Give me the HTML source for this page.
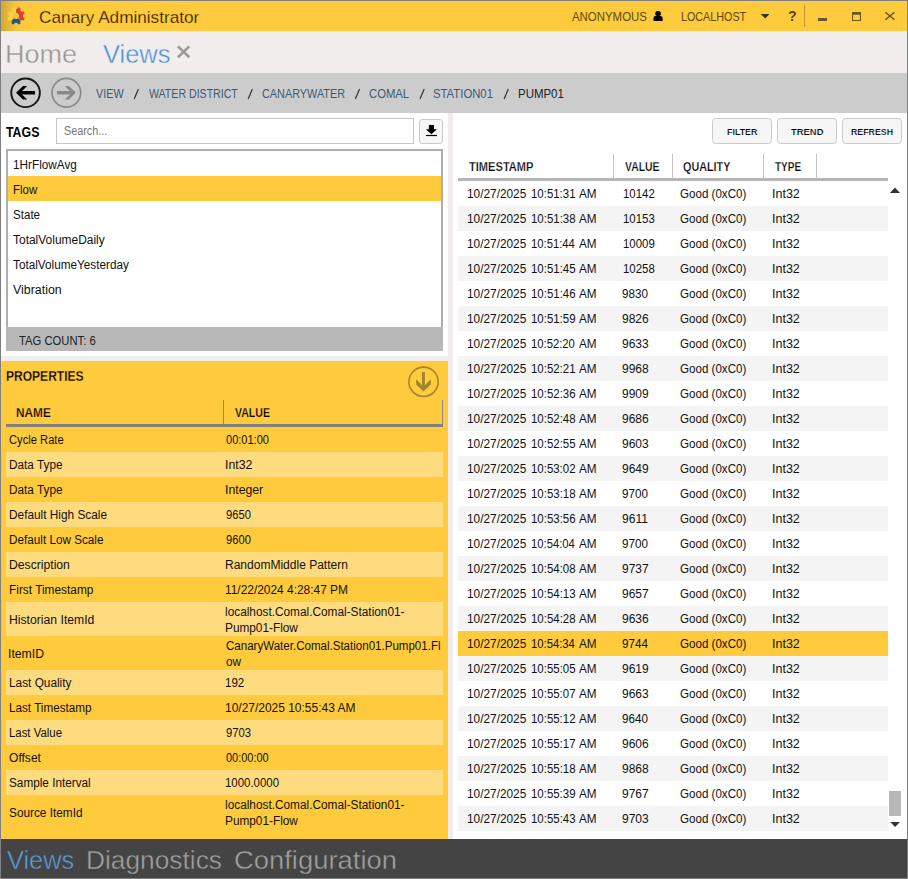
<!DOCTYPE html><html><head><meta charset="utf-8"><title>Canary Administrator</title><style>
html,body{margin:0;padding:0;width:908px;height:879px;overflow:hidden;background:#fff;font-family:"Liberation Sans",sans-serif;}
.b{position:absolute;}
.t{position:absolute;white-space:pre;line-height:1;transform-origin:0 0;}
</style></head><body>
<div class="b" style="left:0px;top:0px;width:908px;height:879px;background:#7f7f7f;"></div>
<div class="b" style="left:1px;top:1px;width:906px;height:30px;background:#FFCB3C;background:linear-gradient(90deg,#d4a830 0px,#f4c440 14px,#ffcb3c 28px,#ffcb3c 100%);"></div>
<div class="b" style="left:1px;top:31px;width:906px;height:42px;background:#f1eded;"></div>
<div class="b" style="left:1px;top:73px;width:906px;height:40px;background:#cccccc;"></div>
<div class="b" style="left:1px;top:113px;width:906px;height:726px;background:#ffffff;"></div>
<div class="b" style="left:448px;top:113px;width:5px;height:726px;background:#f1eded;"></div>
<div class="b" style="left:56px;top:118px;width:358px;height:26px;background:#fff;border:1px solid #c6c6c6;box-sizing:border-box;"></div>
<div class="b" style="left:419px;top:119px;width:24px;height:25px;background:#f7f7f7;border:1px solid #cacaca;border-radius:3px;box-sizing:border-box;"></div>
<div class="b" style="left:6px;top:149px;width:437px;height:202px;background:#adadad;"></div>
<div class="b" style="left:8px;top:151px;width:433px;height:176px;background:#ffffff;"></div>
<div class="b" style="left:8px;top:176px;width:433px;height:25px;background:#FFCB3C;"></div>
<div class="b" style="left:6px;top:327px;width:437px;height:24px;background:#b8b8b8;"></div>
<div class="b" style="left:1px;top:356px;width:447px;height:5px;background:#f1eded;"></div>
<div class="b" style="left:1px;top:361px;width:447px;height:478px;background:#FFCB3C;"></div>
<div class="b" style="left:223px;top:400px;width:1px;height:24px;background:#8a8a8a;"></div>
<div class="b" style="left:442px;top:400px;width:1px;height:27px;background:#8a8a8a;"></div>
<div class="b" style="left:6px;top:424px;width:437px;height:3px;background:#808080;"></div>
<div class="b" style="left:6px;top:452px;width:437px;height:25px;background:#FFDB80;"></div>
<div class="b" style="left:6px;top:502px;width:437px;height:25px;background:#FFDB80;"></div>
<div class="b" style="left:6px;top:552px;width:437px;height:25px;background:#FFDB80;"></div>
<div class="b" style="left:6px;top:602px;width:437px;height:34px;background:#FFDB80;"></div>
<div class="b" style="left:6px;top:670px;width:437px;height:25px;background:#FFDB80;"></div>
<div class="b" style="left:6px;top:720px;width:437px;height:25px;background:#FFDB80;"></div>
<div class="b" style="left:6px;top:770px;width:437px;height:25px;background:#FFDB80;"></div>
<div class="b" style="left:712px;top:118px;width:60px;height:26px;background:#f6f6f6;border:1px solid #cbcbcb;border-radius:3.5px;box-sizing:border-box;"></div>
<div class="b" style="left:777px;top:118px;width:60px;height:26px;background:#f6f6f6;border:1px solid #cbcbcb;border-radius:3.5px;box-sizing:border-box;"></div>
<div class="b" style="left:842px;top:118px;width:60px;height:26px;background:#f6f6f6;border:1px solid #cbcbcb;border-radius:3.5px;box-sizing:border-box;"></div>
<div class="b" style="left:613px;top:154px;width:1px;height:24px;background:#c4c4c4;"></div>
<div class="b" style="left:672px;top:154px;width:1px;height:24px;background:#c4c4c4;"></div>
<div class="b" style="left:763px;top:154px;width:1px;height:24px;background:#c4c4c4;"></div>
<div class="b" style="left:816px;top:154px;width:1px;height:24px;background:#c4c4c4;"></div>
<div class="b" style="left:458px;top:178px;width:430px;height:3px;background:#b5b5b5;"></div>
<div class="b" style="left:458px;top:206px;width:430px;height:25px;background:#f4f4f4;"></div>
<div class="b" style="left:458px;top:256px;width:430px;height:25px;background:#f4f4f4;"></div>
<div class="b" style="left:458px;top:306px;width:430px;height:25px;background:#f4f4f4;"></div>
<div class="b" style="left:458px;top:356px;width:430px;height:25px;background:#f4f4f4;"></div>
<div class="b" style="left:458px;top:406px;width:430px;height:25px;background:#f4f4f4;"></div>
<div class="b" style="left:458px;top:456px;width:430px;height:25px;background:#f4f4f4;"></div>
<div class="b" style="left:458px;top:506px;width:430px;height:25px;background:#f4f4f4;"></div>
<div class="b" style="left:458px;top:556px;width:430px;height:25px;background:#f4f4f4;"></div>
<div class="b" style="left:458px;top:606px;width:430px;height:25px;background:#f4f4f4;"></div>
<div class="b" style="left:458px;top:631px;width:430px;height:25px;background:#FFCB3C;"></div>
<div class="b" style="left:458px;top:656px;width:430px;height:25px;background:#f4f4f4;"></div>
<div class="b" style="left:458px;top:706px;width:430px;height:25px;background:#f4f4f4;"></div>
<div class="b" style="left:458px;top:756px;width:430px;height:25px;background:#f4f4f4;"></div>
<div class="b" style="left:458px;top:806px;width:430px;height:25px;background:#f4f4f4;"></div>
<div class="b" style="left:889px;top:791px;width:12px;height:25px;background:#b8b8b8;"></div>
<div class="b" style="left:1px;top:839px;width:906px;height:39px;background:#444444;"></div>

<svg class="b" style="left:0;top:0" width="908" height="879" viewBox="0 0 908 879">
<!-- logo -->
<path fill="#d3472d" d="M16.15 8.90 L16.33 8.91 L16.51 8.92 L16.70 8.93 L16.88 8.96 L17.06 8.98 L17.28 8.78 L17.57 8.33 L17.88 7.88 L18.22 7.45 L18.51 7.26 L18.74 7.33 L18.96 7.40 L19.18 7.48 L19.40 7.57 L19.62 7.66 L19.83 7.76 L20.04 7.86 L20.25 7.97 L20.43 8.14 L20.37 8.69 L20.29 9.22 L20.18 9.75 L20.08 10.22 L20.23 10.32 L20.38 10.44 L20.52 10.55 L20.66 10.67 L20.79 10.80 L20.92 10.92 L21.05 11.05 L21.18 11.19 L21.30 11.33 L21.42 11.47 L21.53 11.61 L21.64 11.76 L21.94 11.77 L22.46 11.65 L23.00 11.56 L23.54 11.49 L23.89 11.56 L24.00 11.77 L24.10 11.98 L24.20 12.20 L24.30 12.41 L24.39 12.63 L24.47 12.85 L24.54 13.07 L24.62 13.30 L24.62 13.54 L24.19 13.89 L23.75 14.21 L23.30 14.51 L22.91 14.77 L22.94 14.95 L22.96 15.13 L22.98 15.31 L22.99 15.50 L23.00 15.68 L23.00 15.86 L23.00 16.05 L22.99 16.23 L22.98 16.41 L22.97 16.60 L22.94 16.78 L22.92 16.96 L23.12 17.18 L23.57 17.47 L24.02 17.78 L24.45 18.12 L24.64 18.41 L24.57 18.64 L24.50 18.86 L24.42 19.08 L24.33 19.30 L24.24 19.52 L24.14 19.73 L24.04 19.94 L23.93 20.15 L23.76 20.33 L23.21 20.27 L22.68 20.19 L22.15 20.08 L21.68 19.98 L21.58 20.13 L21.46 20.28 L21.35 20.42 L21.23 20.56 L21.10 20.69 L18.24 18.05 L18.45 17.80 L18.63 17.53 L18.79 17.25 L18.92 16.95 L19.01 16.64 L19.07 16.32 L19.10 16.00 L19.09 15.67 L19.05 15.35 L18.98 15.04 L18.87 14.73 L18.73 14.44 L18.56 14.16 L18.37 13.90 L18.15 13.66 L17.90 13.45 L17.63 13.27 L17.35 13.11 L17.05 12.98 L16.74 12.89 L16.42 12.83 L16.10 12.80 Z"/><path fill="#28597a" d="M20.85 20.95 L20.71 21.08 L20.57 21.20 L20.43 21.32 L20.29 21.43 L20.14 21.54 L20.13 21.84 L20.25 22.36 L20.34 22.90 L20.41 23.44 L20.34 23.79 L20.13 23.90 L19.92 24.00 L19.70 24.10 L19.49 24.20 L19.27 24.29 L19.05 24.37 L18.83 24.44 L18.60 24.52 L18.36 24.52 L18.01 24.09 L17.69 23.65 L17.39 23.20 L17.13 22.81 L16.95 22.84 L16.77 22.86 L16.59 22.88 L16.40 22.89 L16.22 22.90 L16.04 22.90 L15.85 22.90 L15.67 22.89 L15.49 22.88 L15.30 22.87 L15.12 22.84 L14.94 22.82 L14.72 23.02 L14.43 23.47 L14.12 23.92 L13.78 24.35 L13.49 24.54 L13.26 24.47 L13.04 24.40 L12.82 24.32 L12.60 24.23 L12.38 24.14 L12.17 24.04 L11.96 23.94 L11.75 23.83 L11.57 23.66 L11.63 23.11 L11.71 22.58 L11.82 22.05 L11.92 21.58 L11.77 21.48 L11.62 21.36 L11.48 21.25 L11.34 21.13 L11.21 21.00 L13.85 18.14 L14.10 18.35 L14.37 18.53 L14.65 18.69 L14.95 18.82 L15.26 18.91 L15.58 18.97 L15.90 19.00 L16.23 18.99 L16.55 18.95 L16.86 18.88 L17.17 18.77 L17.46 18.63 L17.74 18.46 L18.00 18.27 Z"/><path fill="#ffd143" d="M10.95 20.75 L10.82 20.61 L10.70 20.47 L10.58 20.33 L10.47 20.19 L10.36 20.04 L10.06 20.03 L9.54 20.15 L9.00 20.24 L8.46 20.31 L8.11 20.24 L8.00 20.03 L7.90 19.82 L7.80 19.60 L7.70 19.39 L7.61 19.17 L7.53 18.95 L7.46 18.73 L7.38 18.50 L7.38 18.26 L7.81 17.91 L8.25 17.59 L8.70 17.29 L9.09 17.03 L9.06 16.85 L9.04 16.67 L9.02 16.49 L9.01 16.30 L9.00 16.12 L9.00 15.94 L9.00 15.75 L9.01 15.57 L9.02 15.39 L9.03 15.20 L9.06 15.02 L9.08 14.84 L8.88 14.62 L8.43 14.33 L7.98 14.02 L7.55 13.68 L7.36 13.39 L7.43 13.16 L7.50 12.94 L7.58 12.72 L7.67 12.50 L7.76 12.28 L7.86 12.07 L7.96 11.86 L8.07 11.65 L8.24 11.47 L8.79 11.53 L9.32 11.61 L9.85 11.72 L10.32 11.82 L10.42 11.67 L10.54 11.52 L10.65 11.38 L10.77 11.24 L10.90 11.11 L11.02 10.98 L11.15 10.85 L11.29 10.72 L11.43 10.60 L11.57 10.48 L11.71 10.37 L11.86 10.26 L11.87 9.96 L11.75 9.44 L11.66 8.90 L11.59 8.36 L11.66 8.01 L11.87 7.90 L12.08 7.80 L12.30 7.70 L12.51 7.60 L12.73 7.51 L12.95 7.43 L13.17 7.36 L13.40 7.28 L13.64 7.28 L13.99 7.71 L14.31 8.15 L14.61 8.60 L14.87 8.99 L15.05 8.96 L15.23 8.94 L15.41 8.92 L15.60 8.91 L15.78 8.90 L15.94 12.80 L15.61 12.82 L15.29 12.88 L14.98 12.97 L14.68 13.10 L14.39 13.25 L14.13 13.43 L13.88 13.64 L13.65 13.87 L13.45 14.13 L13.28 14.41 L13.14 14.70 L13.03 15.00 L12.95 15.32 L12.91 15.64 L12.90 15.96 L12.92 16.29 L12.98 16.61 L13.07 16.92 L13.20 17.22 L13.35 17.51 L13.53 17.77 L13.74 18.02 Z"/>
<!-- person -->
<g fill="#000"><ellipse cx="658.05" cy="13.6" rx="2.85" ry="2.6"/><path d="M653.5 20.9 V17.8 Q653.5 16 655.6 16 H660.5 Q662.6 16 662.6 17.8 V20.9 Z"/></g>
<!-- dropdown -->
<path d="M760.8 14 L769.5 14 L765.15 18.6 Z" fill="#333"/>
<!-- sep -->
<rect x="804" y="5" width="1" height="22" fill="#c39a2e"/>
<!-- min -->
<rect x="818" y="18" width="9" height="3" fill="#6b5720"/>
<!-- max -->
<path d="M852 12 H861 V21 H852 Z M853.1 14.7 V19.9 H859.9 V14.7 Z" fill="#6b5720" fill-rule="evenodd"/>
<!-- close -->
<path d="M885.4 12.3 L894.5 19.8 M894.5 12.3 L885.4 19.8" stroke="#5e4c18" stroke-width="1.3" fill="none"/>
<!-- tab close -->
<path d="M178.0 46.4 L189.3 57.3 M189.3 46.4 L178.0 57.3" stroke="#9a9a9a" stroke-width="2.6" fill="none"/>
<!-- slashes --><path d="M134.2 98.9 L138.4 88.9" stroke="#333" stroke-width="1.2" fill="none"/><path d="M248.2 98.9 L252.4 88.9" stroke="#333" stroke-width="1.2" fill="none"/><path d="M355.3 98.9 L359.5 88.9" stroke="#333" stroke-width="1.2" fill="none"/><path d="M420.0 98.9 L424.2 88.9" stroke="#333" stroke-width="1.2" fill="none"/><path d="M504.1 98.9 L508.3 88.9" stroke="#333" stroke-width="1.2" fill="none"/>
<!-- back -->
<circle cx="25.55" cy="92.8" r="14.3" fill="none" stroke="#161616" stroke-width="1.9"/>
<path d="M16 92.8 L23 86 L27.2 86 L22.0 91.1 L35 91.1 L35 94.5 L22.0 94.5 L27.2 99.6 L23 99.6 Z" fill="#000"/>
<!-- fwd -->
<circle cx="66.35" cy="92.8" r="14.35" fill="none" stroke="#8b8b8b" stroke-width="1.7"/>
<path d="M75.9 92.8 L68.9 86 L64.7 86 L69.9 91.1 L56.9 91.1 L56.9 94.5 L69.9 94.5 L64.7 99.6 L68.9 99.6 Z" fill="#8a8a8a"/>
<!-- download -->
<path d="M428.9 125 H434 V129.2 H437 L431.45 134.3 L425.9 129.2 H428.9 Z" fill="#000"/>
<rect x="425.9" y="134.9" width="11.1" height="1.2" fill="#000"/>
<!-- props circle -->
<circle cx="423.55" cy="381.8" r="14.65" fill="none" stroke="#a3862b" stroke-width="1.6"/>
<path d="M422 372 H424.9 V385.2 L430.85 379.3 V384.5 L423.5 391.6 L416.1 384.5 V379.3 L422 385.2 Z" fill="#a3862b"/>
<!-- scroll arrows -->
<path d="M889.9 193 L900 193 L894.95 187.4 Z" fill="#333"/>
<path d="M890.2 822 L900 822 L895.1 827 Z" fill="#333"/>
</svg>

<span class="t" style="left:39.15px;top:9px;font-size:17px;color:#1c1500;transform:scaleX(1.0096);-webkit-text-stroke:0.25px #FFCB3C;">Canary Administrator</span>
<span class="t" style="left:572.35px;top:11px;font-size:12px;color:#5a4a18;transform:scaleX(0.9518);">ANONYMOUS</span>
<span class="t" style="left:680.75px;top:11px;font-size:12px;color:#5a4a18;transform:scaleX(0.8961);">LOCALHOST</span>
<span class="t" style="left:787.61px;top:9px;font-size:14.6px;font-weight:700;color:#5a4410;transform:scaleX(0.9655);">?</span>
<span class="t" style="left:4.82px;top:41px;font-size:26.4px;color:#959595;transform:scaleX(1.0245);-webkit-text-stroke:0.4px #f1eded;">Home</span>
<span class="t" style="left:103.12px;top:41px;font-size:26.4px;color:#4a90d9;transform:scaleX(0.9657);-webkit-text-stroke:0.4px #f1eded;">Views</span>
<span class="t" style="left:96.35px;top:88px;font-size:12.9px;color:#3b5a78;transform:scaleX(0.8382);">VIEW</span>
<span class="t" style="left:148.58px;top:88px;font-size:12.9px;color:#3b5a78;transform:scaleX(0.8212);">WATER DISTRICT</span>
<span class="t" style="left:262.01px;top:88px;font-size:12.9px;color:#3b5a78;transform:scaleX(0.8420);">CANARYWATER</span>
<span class="t" style="left:369.20px;top:88px;font-size:12.9px;color:#3b5a78;transform:scaleX(0.8736);">COMAL</span>
<span class="t" style="left:433.36px;top:88px;font-size:12.9px;color:#3b5a78;transform:scaleX(0.8781);">STATION01</span>
<span class="t" style="left:517.73px;top:88px;font-size:12.9px;color:#222;transform:scaleX(0.8882);">PUMP01</span>
<span class="t" style="left:5.99px;top:125px;font-size:14px;font-weight:700;color:#000;transform:scaleX(0.8814);">TAGS</span>
<span class="t" style="left:63.63px;top:125px;font-size:12px;color:#777;transform:scaleX(0.9013);">Search...</span>
<span class="t" style="left:12.58px;top:159px;font-size:12px;color:#111;transform:scaleX(0.9799);">1HrFlowAvg</span>
<span class="t" style="left:12.59px;top:184px;font-size:12px;color:#111;transform:scaleX(0.9574);">Flow</span>
<span class="t" style="left:12.56px;top:209px;font-size:12px;color:#111;transform:scaleX(0.9647);">State</span>
<span class="t" style="left:13.44px;top:234px;font-size:12px;color:#111;transform:scaleX(0.9966);">TotalVolumeDaily</span>
<span class="t" style="left:13.44px;top:259px;font-size:12px;color:#111;transform:scaleX(0.9794);">TotalVolumeYesterday</span>
<span class="t" style="left:13.43px;top:284px;font-size:12px;color:#111;transform:scaleX(1.0328);">Vibration</span>
<span class="t" style="left:19.35px;top:335px;font-size:12px;color:#222;transform:scaleX(0.9377);">TAG COUNT: 6</span>
<span class="t" style="left:5.99px;top:370px;font-size:13.8px;font-weight:700;color:#000;transform:scaleX(0.8725);-webkit-text-stroke:0.28px #FFCB3C;">PROPERTIES</span>
<span class="t" style="left:15.99px;top:407px;font-size:12px;font-weight:700;color:#000;transform:scaleX(0.9858);-webkit-text-stroke:0.25px #FFCB3C;">NAME</span>
<span class="t" style="left:235.06px;top:407px;font-size:12px;font-weight:700;color:#000;transform:scaleX(0.8777);-webkit-text-stroke:0.25px #FFCB3C;">VALUE</span>
<span class="t" style="left:9.29px;top:434px;font-size:12px;color:#111;transform:scaleX(0.9315);">Cycle Rate</span>
<span class="t" style="left:225.56px;top:434px;font-size:12px;color:#111;transform:scaleX(0.9185);">00:01:00</span>
<span class="t" style="left:8.56px;top:459px;font-size:12px;color:#111;transform:scaleX(0.9816);">Data Type</span>
<span class="t" style="left:224.95px;top:459px;font-size:12px;color:#111;transform:scaleX(1.0220);">Int32</span>
<span class="t" style="left:8.56px;top:484px;font-size:12px;color:#111;transform:scaleX(0.9816);">Data Type</span>
<span class="t" style="left:224.95px;top:484px;font-size:12px;color:#111;transform:scaleX(1.0222);">Integer</span>
<span class="t" style="left:8.56px;top:509px;font-size:12px;color:#111;transform:scaleX(0.9860);">Default High Scale</span>
<span class="t" style="left:225.79px;top:509px;font-size:12px;color:#111;transform:scaleX(0.9310);">9650</span>
<span class="t" style="left:8.57px;top:534px;font-size:12px;color:#111;transform:scaleX(0.9766);">Default Low Scale</span>
<span class="t" style="left:225.79px;top:534px;font-size:12px;color:#111;transform:scaleX(0.9310);">9600</span>
<span class="t" style="left:8.53px;top:559px;font-size:12px;color:#111;transform:scaleX(1.0140);">Description</span>
<span class="t" style="left:225.04px;top:559px;font-size:12px;color:#111;transform:scaleX(1.0015);">RandomMiddle Pattern</span>
<span class="t" style="left:8.55px;top:584px;font-size:12px;color:#111;transform:scaleX(0.9888);">First Timestamp</span>
<span class="t" style="left:225.06px;top:584px;font-size:12px;color:#111;transform:scaleX(0.9924);">11/22/2024 4:28:47 PM</span>
<span class="t" style="left:8.52px;top:614px;font-size:12px;color:#111;transform:scaleX(1.0161);">Historian ItemId</span>
<span class="t" style="left:225.00px;top:606px;font-size:12px;color:#111;transform:scaleX(0.9860);">localhost.Comal.Comal-Station01-</span>
<span class="t" style="left:225.06px;top:622px;font-size:12px;color:#111;transform:scaleX(0.9848);">Pump01-Flow</span>
<span class="t" style="left:8.45px;top:648px;font-size:12px;color:#111;transform:scaleX(1.0189);">ItemID</span>
<span class="t" style="left:225.78px;top:640px;font-size:12px;color:#111;transform:scaleX(0.9619);">CanaryWater.Comal.Station01.Pump01.Fl</span>
<span class="t" style="left:225.82px;top:656px;font-size:12px;color:#111;transform:scaleX(0.9793);">ow</span>
<span class="t" style="left:8.56px;top:677px;font-size:12px;color:#111;transform:scaleX(0.9850);">Last Quality</span>
<span class="t" style="left:225.09px;top:677px;font-size:12px;color:#111;transform:scaleX(0.9643);">192</span>
<span class="t" style="left:8.57px;top:702px;font-size:12px;color:#111;transform:scaleX(0.9739);">Last Timestamp</span>
<span class="t" style="left:225.06px;top:702px;font-size:12px;color:#111;transform:scaleX(0.9972);">10/27/2025 10:55:43 AM</span>
<span class="t" style="left:8.59px;top:727px;font-size:12px;color:#111;transform:scaleX(0.9495);">Last Value</span>
<span class="t" style="left:225.79px;top:727px;font-size:12px;color:#111;transform:scaleX(0.9389);">9703</span>
<span class="t" style="left:9.29px;top:752px;font-size:12px;color:#111;transform:scaleX(1.0050);">Offset</span>
<span class="t" style="left:225.56px;top:752px;font-size:12px;color:#111;transform:scaleX(0.9120);">00:00:00</span>
<span class="t" style="left:8.54px;top:777px;font-size:12px;color:#111;transform:scaleX(0.9799);">Sample Interval</span>
<span class="t" style="left:225.10px;top:777px;font-size:12px;color:#111;transform:scaleX(0.9532);">1000.0000</span>
<span class="t" style="left:8.54px;top:807px;font-size:12px;color:#111;transform:scaleX(0.9845);">Source ItemId</span>
<span class="t" style="left:225.00px;top:799px;font-size:12px;color:#111;transform:scaleX(0.9860);">localhost.Comal.Comal-Station01-</span>
<span class="t" style="left:225.06px;top:815px;font-size:12px;color:#111;transform:scaleX(0.9848);">Pump01-Flow</span>
<span class="t" style="left:727.10px;top:127px;font-size:9.7px;font-weight:700;color:#000;transform:scaleX(0.9184);-webkit-text-stroke:0.2px #f6f6f6;">FILTER</span>
<span class="t" style="left:791.10px;top:127px;font-size:9.7px;font-weight:700;color:#000;transform:scaleX(0.9728);-webkit-text-stroke:0.2px #f6f6f6;">TREND</span>
<span class="t" style="left:851.20px;top:127px;font-size:9.7px;font-weight:700;color:#000;transform:scaleX(0.9077);-webkit-text-stroke:0.2px #f6f6f6;">REFRESH</span>
<span class="t" style="left:469.00px;top:161px;font-size:12px;font-weight:700;color:#000;transform:scaleX(0.9240);-webkit-text-stroke:0.25px #fff;">TIMESTAMP</span>
<span class="t" style="left:624.66px;top:161px;font-size:12px;font-weight:700;color:#000;transform:scaleX(0.8651);-webkit-text-stroke:0.25px #fff;">VALUE</span>
<span class="t" style="left:683.04px;top:161px;font-size:12px;font-weight:700;color:#000;transform:scaleX(0.8988);-webkit-text-stroke:0.25px #fff;">QUALITY</span>
<span class="t" style="left:775.01px;top:161px;font-size:12px;font-weight:700;color:#000;transform:scaleX(0.8345);-webkit-text-stroke:0.25px #fff;">TYPE</span>
<span class="t" style="left:466.87px;top:188px;font-size:12px;color:#111;transform:scaleX(0.9868);">10/27/2025</span>
<span class="t" style="left:531.20px;top:188px;font-size:12px;color:#111;transform:scaleX(0.9525);">10:51:31</span>
<span class="t" style="left:578.94px;top:188px;font-size:12px;color:#111;transform:scaleX(0.9758);">AM</span>
<span class="t" style="left:622.91px;top:188px;font-size:12px;color:#111;transform:scaleX(0.9506);">10142</span>
<span class="t" style="left:680.48px;top:188px;font-size:12px;color:#111;transform:scaleX(0.9651);">Good (0xC0)</span>
<span class="t" style="left:771.93px;top:188px;font-size:12px;color:#111;transform:scaleX(1.0421);">Int32</span>
<span class="t" style="left:466.87px;top:213px;font-size:12px;color:#111;transform:scaleX(0.9868);">10/27/2025</span>
<span class="t" style="left:531.20px;top:213px;font-size:12px;color:#111;transform:scaleX(0.9544);">10:51:38</span>
<span class="t" style="left:578.94px;top:213px;font-size:12px;color:#111;transform:scaleX(0.9758);">AM</span>
<span class="t" style="left:622.91px;top:213px;font-size:12px;color:#111;transform:scaleX(0.9517);">10153</span>
<span class="t" style="left:680.48px;top:213px;font-size:12px;color:#111;transform:scaleX(0.9651);">Good (0xC0)</span>
<span class="t" style="left:771.93px;top:213px;font-size:12px;color:#111;transform:scaleX(1.0421);">Int32</span>
<span class="t" style="left:466.87px;top:238px;font-size:12px;color:#111;transform:scaleX(0.9868);">10/27/2025</span>
<span class="t" style="left:531.22px;top:238px;font-size:12px;color:#111;transform:scaleX(0.9372);">10:51:44</span>
<span class="t" style="left:578.94px;top:238px;font-size:12px;color:#111;transform:scaleX(0.9758);">AM</span>
<span class="t" style="left:622.91px;top:238px;font-size:12px;color:#111;transform:scaleX(0.9507);">10009</span>
<span class="t" style="left:680.48px;top:238px;font-size:12px;color:#111;transform:scaleX(0.9651);">Good (0xC0)</span>
<span class="t" style="left:771.93px;top:238px;font-size:12px;color:#111;transform:scaleX(1.0421);">Int32</span>
<span class="t" style="left:466.87px;top:263px;font-size:12px;color:#111;transform:scaleX(0.9868);">10/27/2025</span>
<span class="t" style="left:531.20px;top:263px;font-size:12px;color:#111;transform:scaleX(0.9544);">10:51:45</span>
<span class="t" style="left:578.94px;top:263px;font-size:12px;color:#111;transform:scaleX(0.9758);">AM</span>
<span class="t" style="left:622.91px;top:263px;font-size:12px;color:#111;transform:scaleX(0.9517);">10258</span>
<span class="t" style="left:680.48px;top:263px;font-size:12px;color:#111;transform:scaleX(0.9651);">Good (0xC0)</span>
<span class="t" style="left:771.93px;top:263px;font-size:12px;color:#111;transform:scaleX(1.0421);">Int32</span>
<span class="t" style="left:466.87px;top:288px;font-size:12px;color:#111;transform:scaleX(0.9868);">10/27/2025</span>
<span class="t" style="left:531.20px;top:288px;font-size:12px;color:#111;transform:scaleX(0.9544);">10:51:46</span>
<span class="t" style="left:578.94px;top:288px;font-size:12px;color:#111;transform:scaleX(0.9758);">AM</span>
<span class="t" style="left:622.28px;top:288px;font-size:12px;color:#111;transform:scaleX(0.9728);">9830</span>
<span class="t" style="left:680.48px;top:288px;font-size:12px;color:#111;transform:scaleX(0.9651);">Good (0xC0)</span>
<span class="t" style="left:771.93px;top:288px;font-size:12px;color:#111;transform:scaleX(1.0421);">Int32</span>
<span class="t" style="left:466.87px;top:313px;font-size:12px;color:#111;transform:scaleX(0.9868);">10/27/2025</span>
<span class="t" style="left:531.20px;top:313px;font-size:12px;color:#111;transform:scaleX(0.9528);">10:51:59</span>
<span class="t" style="left:578.94px;top:313px;font-size:12px;color:#111;transform:scaleX(0.9758);">AM</span>
<span class="t" style="left:622.27px;top:313px;font-size:12px;color:#111;transform:scaleX(1.0015);">9826</span>
<span class="t" style="left:680.48px;top:313px;font-size:12px;color:#111;transform:scaleX(0.9651);">Good (0xC0)</span>
<span class="t" style="left:771.93px;top:313px;font-size:12px;color:#111;transform:scaleX(1.0421);">Int32</span>
<span class="t" style="left:466.87px;top:338px;font-size:12px;color:#111;transform:scaleX(0.9868);">10/27/2025</span>
<span class="t" style="left:531.22px;top:338px;font-size:12px;color:#111;transform:scaleX(0.9386);">10:52:20</span>
<span class="t" style="left:578.94px;top:338px;font-size:12px;color:#111;transform:scaleX(0.9758);">AM</span>
<span class="t" style="left:622.27px;top:338px;font-size:12px;color:#111;transform:scaleX(1.0015);">9633</span>
<span class="t" style="left:680.48px;top:338px;font-size:12px;color:#111;transform:scaleX(0.9651);">Good (0xC0)</span>
<span class="t" style="left:771.93px;top:338px;font-size:12px;color:#111;transform:scaleX(1.0421);">Int32</span>
<span class="t" style="left:466.87px;top:363px;font-size:12px;color:#111;transform:scaleX(0.9868);">10/27/2025</span>
<span class="t" style="left:531.20px;top:363px;font-size:12px;color:#111;transform:scaleX(0.9525);">10:52:21</span>
<span class="t" style="left:578.94px;top:363px;font-size:12px;color:#111;transform:scaleX(0.9758);">AM</span>
<span class="t" style="left:622.27px;top:363px;font-size:12px;color:#111;transform:scaleX(1.0016);">9968</span>
<span class="t" style="left:680.48px;top:363px;font-size:12px;color:#111;transform:scaleX(0.9651);">Good (0xC0)</span>
<span class="t" style="left:771.93px;top:363px;font-size:12px;color:#111;transform:scaleX(1.0421);">Int32</span>
<span class="t" style="left:466.87px;top:388px;font-size:12px;color:#111;transform:scaleX(0.9868);">10/27/2025</span>
<span class="t" style="left:531.20px;top:388px;font-size:12px;color:#111;transform:scaleX(0.9544);">10:52:36</span>
<span class="t" style="left:578.94px;top:388px;font-size:12px;color:#111;transform:scaleX(0.9758);">AM</span>
<span class="t" style="left:622.27px;top:388px;font-size:12px;color:#111;transform:scaleX(0.9987);">9909</span>
<span class="t" style="left:680.48px;top:388px;font-size:12px;color:#111;transform:scaleX(0.9651);">Good (0xC0)</span>
<span class="t" style="left:771.93px;top:388px;font-size:12px;color:#111;transform:scaleX(1.0421);">Int32</span>
<span class="t" style="left:466.87px;top:413px;font-size:12px;color:#111;transform:scaleX(0.9868);">10/27/2025</span>
<span class="t" style="left:531.20px;top:413px;font-size:12px;color:#111;transform:scaleX(0.9544);">10:52:48</span>
<span class="t" style="left:578.94px;top:413px;font-size:12px;color:#111;transform:scaleX(0.9758);">AM</span>
<span class="t" style="left:622.27px;top:413px;font-size:12px;color:#111;transform:scaleX(1.0015);">9686</span>
<span class="t" style="left:680.48px;top:413px;font-size:12px;color:#111;transform:scaleX(0.9651);">Good (0xC0)</span>
<span class="t" style="left:771.93px;top:413px;font-size:12px;color:#111;transform:scaleX(1.0421);">Int32</span>
<span class="t" style="left:466.87px;top:438px;font-size:12px;color:#111;transform:scaleX(0.9868);">10/27/2025</span>
<span class="t" style="left:531.20px;top:438px;font-size:12px;color:#111;transform:scaleX(0.9544);">10:52:55</span>
<span class="t" style="left:578.94px;top:438px;font-size:12px;color:#111;transform:scaleX(0.9758);">AM</span>
<span class="t" style="left:622.27px;top:438px;font-size:12px;color:#111;transform:scaleX(1.0015);">9603</span>
<span class="t" style="left:680.48px;top:438px;font-size:12px;color:#111;transform:scaleX(0.9651);">Good (0xC0)</span>
<span class="t" style="left:771.93px;top:438px;font-size:12px;color:#111;transform:scaleX(1.0421);">Int32</span>
<span class="t" style="left:466.87px;top:463px;font-size:12px;color:#111;transform:scaleX(0.9868);">10/27/2025</span>
<span class="t" style="left:531.20px;top:463px;font-size:12px;color:#111;transform:scaleX(0.9525);">10:53:02</span>
<span class="t" style="left:578.94px;top:463px;font-size:12px;color:#111;transform:scaleX(0.9758);">AM</span>
<span class="t" style="left:622.27px;top:463px;font-size:12px;color:#111;transform:scaleX(0.9987);">9649</span>
<span class="t" style="left:680.48px;top:463px;font-size:12px;color:#111;transform:scaleX(0.9651);">Good (0xC0)</span>
<span class="t" style="left:771.93px;top:463px;font-size:12px;color:#111;transform:scaleX(1.0421);">Int32</span>
<span class="t" style="left:466.87px;top:488px;font-size:12px;color:#111;transform:scaleX(0.9868);">10/27/2025</span>
<span class="t" style="left:531.20px;top:488px;font-size:12px;color:#111;transform:scaleX(0.9544);">10:53:18</span>
<span class="t" style="left:578.94px;top:488px;font-size:12px;color:#111;transform:scaleX(0.9758);">AM</span>
<span class="t" style="left:622.28px;top:488px;font-size:12px;color:#111;transform:scaleX(0.9728);">9700</span>
<span class="t" style="left:680.48px;top:488px;font-size:12px;color:#111;transform:scaleX(0.9651);">Good (0xC0)</span>
<span class="t" style="left:771.93px;top:488px;font-size:12px;color:#111;transform:scaleX(1.0421);">Int32</span>
<span class="t" style="left:466.87px;top:513px;font-size:12px;color:#111;transform:scaleX(0.9868);">10/27/2025</span>
<span class="t" style="left:531.20px;top:513px;font-size:12px;color:#111;transform:scaleX(0.9544);">10:53:56</span>
<span class="t" style="left:578.94px;top:513px;font-size:12px;color:#111;transform:scaleX(0.9758);">AM</span>
<span class="t" style="left:622.27px;top:513px;font-size:12px;color:#111;transform:scaleX(1.0083);">9611</span>
<span class="t" style="left:680.48px;top:513px;font-size:12px;color:#111;transform:scaleX(0.9651);">Good (0xC0)</span>
<span class="t" style="left:771.93px;top:513px;font-size:12px;color:#111;transform:scaleX(1.0421);">Int32</span>
<span class="t" style="left:466.87px;top:538px;font-size:12px;color:#111;transform:scaleX(0.9868);">10/27/2025</span>
<span class="t" style="left:531.22px;top:538px;font-size:12px;color:#111;transform:scaleX(0.9372);">10:54:04</span>
<span class="t" style="left:578.94px;top:538px;font-size:12px;color:#111;transform:scaleX(0.9758);">AM</span>
<span class="t" style="left:622.28px;top:538px;font-size:12px;color:#111;transform:scaleX(0.9728);">9700</span>
<span class="t" style="left:680.48px;top:538px;font-size:12px;color:#111;transform:scaleX(0.9651);">Good (0xC0)</span>
<span class="t" style="left:771.93px;top:538px;font-size:12px;color:#111;transform:scaleX(1.0421);">Int32</span>
<span class="t" style="left:466.87px;top:563px;font-size:12px;color:#111;transform:scaleX(0.9868);">10/27/2025</span>
<span class="t" style="left:531.20px;top:563px;font-size:12px;color:#111;transform:scaleX(0.9544);">10:54:08</span>
<span class="t" style="left:578.94px;top:563px;font-size:12px;color:#111;transform:scaleX(0.9758);">AM</span>
<span class="t" style="left:622.27px;top:563px;font-size:12px;color:#111;transform:scaleX(0.9982);">9737</span>
<span class="t" style="left:680.48px;top:563px;font-size:12px;color:#111;transform:scaleX(0.9651);">Good (0xC0)</span>
<span class="t" style="left:771.93px;top:563px;font-size:12px;color:#111;transform:scaleX(1.0421);">Int32</span>
<span class="t" style="left:466.87px;top:588px;font-size:12px;color:#111;transform:scaleX(0.9868);">10/27/2025</span>
<span class="t" style="left:531.20px;top:588px;font-size:12px;color:#111;transform:scaleX(0.9543);">10:54:13</span>
<span class="t" style="left:578.94px;top:588px;font-size:12px;color:#111;transform:scaleX(0.9758);">AM</span>
<span class="t" style="left:622.27px;top:588px;font-size:12px;color:#111;transform:scaleX(0.9982);">9657</span>
<span class="t" style="left:680.48px;top:588px;font-size:12px;color:#111;transform:scaleX(0.9651);">Good (0xC0)</span>
<span class="t" style="left:771.93px;top:588px;font-size:12px;color:#111;transform:scaleX(1.0421);">Int32</span>
<span class="t" style="left:466.87px;top:613px;font-size:12px;color:#111;transform:scaleX(0.9868);">10/27/2025</span>
<span class="t" style="left:531.20px;top:613px;font-size:12px;color:#111;transform:scaleX(0.9544);">10:54:28</span>
<span class="t" style="left:578.94px;top:613px;font-size:12px;color:#111;transform:scaleX(0.9758);">AM</span>
<span class="t" style="left:622.27px;top:613px;font-size:12px;color:#111;transform:scaleX(1.0015);">9636</span>
<span class="t" style="left:680.48px;top:613px;font-size:12px;color:#111;transform:scaleX(0.9651);">Good (0xC0)</span>
<span class="t" style="left:771.93px;top:613px;font-size:12px;color:#111;transform:scaleX(1.0421);">Int32</span>
<span class="t" style="left:466.87px;top:638px;font-size:12px;color:#111;transform:scaleX(0.9868);">10/27/2025</span>
<span class="t" style="left:531.22px;top:638px;font-size:12px;color:#111;transform:scaleX(0.9372);">10:54:34</span>
<span class="t" style="left:578.94px;top:638px;font-size:12px;color:#111;transform:scaleX(0.9758);">AM</span>
<span class="t" style="left:622.28px;top:638px;font-size:12px;color:#111;transform:scaleX(0.9704);">9744</span>
<span class="t" style="left:680.48px;top:638px;font-size:12px;color:#111;transform:scaleX(0.9651);">Good (0xC0)</span>
<span class="t" style="left:771.93px;top:638px;font-size:12px;color:#111;transform:scaleX(1.0421);">Int32</span>
<span class="t" style="left:466.87px;top:663px;font-size:12px;color:#111;transform:scaleX(0.9868);">10/27/2025</span>
<span class="t" style="left:531.20px;top:663px;font-size:12px;color:#111;transform:scaleX(0.9544);">10:55:05</span>
<span class="t" style="left:578.94px;top:663px;font-size:12px;color:#111;transform:scaleX(0.9758);">AM</span>
<span class="t" style="left:622.27px;top:663px;font-size:12px;color:#111;transform:scaleX(0.9987);">9619</span>
<span class="t" style="left:680.48px;top:663px;font-size:12px;color:#111;transform:scaleX(0.9651);">Good (0xC0)</span>
<span class="t" style="left:771.93px;top:663px;font-size:12px;color:#111;transform:scaleX(1.0421);">Int32</span>
<span class="t" style="left:466.87px;top:688px;font-size:12px;color:#111;transform:scaleX(0.9868);">10/27/2025</span>
<span class="t" style="left:531.20px;top:688px;font-size:12px;color:#111;transform:scaleX(0.9525);">10:55:07</span>
<span class="t" style="left:578.94px;top:688px;font-size:12px;color:#111;transform:scaleX(0.9758);">AM</span>
<span class="t" style="left:622.27px;top:688px;font-size:12px;color:#111;transform:scaleX(1.0015);">9663</span>
<span class="t" style="left:680.48px;top:688px;font-size:12px;color:#111;transform:scaleX(0.9651);">Good (0xC0)</span>
<span class="t" style="left:771.93px;top:688px;font-size:12px;color:#111;transform:scaleX(1.0421);">Int32</span>
<span class="t" style="left:466.87px;top:713px;font-size:12px;color:#111;transform:scaleX(0.9868);">10/27/2025</span>
<span class="t" style="left:531.20px;top:713px;font-size:12px;color:#111;transform:scaleX(0.9525);">10:55:12</span>
<span class="t" style="left:578.94px;top:713px;font-size:12px;color:#111;transform:scaleX(0.9758);">AM</span>
<span class="t" style="left:622.28px;top:713px;font-size:12px;color:#111;transform:scaleX(0.9728);">9640</span>
<span class="t" style="left:680.48px;top:713px;font-size:12px;color:#111;transform:scaleX(0.9651);">Good (0xC0)</span>
<span class="t" style="left:771.93px;top:713px;font-size:12px;color:#111;transform:scaleX(1.0421);">Int32</span>
<span class="t" style="left:466.87px;top:738px;font-size:12px;color:#111;transform:scaleX(0.9868);">10/27/2025</span>
<span class="t" style="left:531.20px;top:738px;font-size:12px;color:#111;transform:scaleX(0.9525);">10:55:17</span>
<span class="t" style="left:578.94px;top:738px;font-size:12px;color:#111;transform:scaleX(0.9758);">AM</span>
<span class="t" style="left:622.27px;top:738px;font-size:12px;color:#111;transform:scaleX(1.0015);">9606</span>
<span class="t" style="left:680.48px;top:738px;font-size:12px;color:#111;transform:scaleX(0.9651);">Good (0xC0)</span>
<span class="t" style="left:771.93px;top:738px;font-size:12px;color:#111;transform:scaleX(1.0421);">Int32</span>
<span class="t" style="left:466.87px;top:763px;font-size:12px;color:#111;transform:scaleX(0.9868);">10/27/2025</span>
<span class="t" style="left:531.20px;top:763px;font-size:12px;color:#111;transform:scaleX(0.9544);">10:55:18</span>
<span class="t" style="left:578.94px;top:763px;font-size:12px;color:#111;transform:scaleX(0.9758);">AM</span>
<span class="t" style="left:622.27px;top:763px;font-size:12px;color:#111;transform:scaleX(1.0016);">9868</span>
<span class="t" style="left:680.48px;top:763px;font-size:12px;color:#111;transform:scaleX(0.9651);">Good (0xC0)</span>
<span class="t" style="left:771.93px;top:763px;font-size:12px;color:#111;transform:scaleX(1.0421);">Int32</span>
<span class="t" style="left:466.87px;top:788px;font-size:12px;color:#111;transform:scaleX(0.9868);">10/27/2025</span>
<span class="t" style="left:531.20px;top:788px;font-size:12px;color:#111;transform:scaleX(0.9528);">10:55:39</span>
<span class="t" style="left:578.94px;top:788px;font-size:12px;color:#111;transform:scaleX(0.9758);">AM</span>
<span class="t" style="left:622.27px;top:788px;font-size:12px;color:#111;transform:scaleX(0.9982);">9767</span>
<span class="t" style="left:680.48px;top:788px;font-size:12px;color:#111;transform:scaleX(0.9651);">Good (0xC0)</span>
<span class="t" style="left:771.93px;top:788px;font-size:12px;color:#111;transform:scaleX(1.0421);">Int32</span>
<span class="t" style="left:466.87px;top:813px;font-size:12px;color:#111;transform:scaleX(0.9868);">10/27/2025</span>
<span class="t" style="left:531.20px;top:813px;font-size:12px;color:#111;transform:scaleX(0.9543);">10:55:43</span>
<span class="t" style="left:578.94px;top:813px;font-size:12px;color:#111;transform:scaleX(0.9758);">AM</span>
<span class="t" style="left:622.27px;top:813px;font-size:12px;color:#111;transform:scaleX(1.0015);">9703</span>
<span class="t" style="left:680.48px;top:813px;font-size:12px;color:#111;transform:scaleX(0.9651);">Good (0xC0)</span>
<span class="t" style="left:771.93px;top:813px;font-size:12px;color:#111;transform:scaleX(1.0421);">Int32</span>
<span class="t" style="left:7.02px;top:847px;font-size:26.2px;color:#5b9bd5;transform:scaleX(0.9689);-webkit-text-stroke:0.4px #444444;">Views</span>
<span class="t" style="left:86.38px;top:847px;font-size:26.2px;color:#a0a0a0;transform:scaleX(1.0044);-webkit-text-stroke:0.4px #444444;">Diagnostics</span>
<span class="t" style="left:234.04px;top:847px;font-size:26.2px;color:#a0a0a0;transform:scaleX(1.0460);-webkit-text-stroke:0.4px #444444;">Configuration</span>
</body></html>
